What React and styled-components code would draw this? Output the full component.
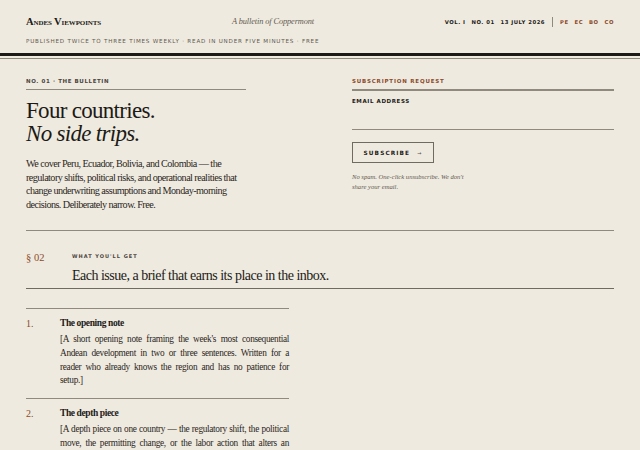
import React from "react";
import styled, { createGlobalStyle } from "styled-components";

const ink = "#1c1a17";
const paper = "#efeadf";
const copper = "#8a4b2c";
const muted = "#5e5850";
const rule = "#8f897e";

const serif = `"Liberation Serif", "Times New Roman", serif`;
const sans = `"DejaVu Sans", Verdana, sans-serif`;

const Global = createGlobalStyle`
  html, body { margin: 0; padding: 0; background: ${paper}; }
  body { color: ${ink}; font-family: ${serif}; }
  * { box-sizing: border-box; }
`;

const Page = styled.div`
  width: 640px;
  min-height: 450px;
  background: ${paper};
`;

const Masthead = styled.header`
  padding: 16px 26px 9px;
  border-bottom: 3px solid ${ink};
  box-shadow: 0 2px 0 ${paper}, 0 3px 0 ${rule};
`;

const MastRow = styled.div`
  display: flex;
  justify-content: space-between;
  align-items: center;
`;

const Brand = styled.div`
  font-family: ${serif};
  font-weight: 700;
  font-variant: small-caps;
  font-size: 10.5px;
  letter-spacing: -0.1px;
`;

const Tagline = styled.div`
  font-style: italic;
  font-size: 8.3px;
  letter-spacing: -0.1px;
  color: ${muted};
`;

const Meta = styled.div`
  display: flex;
  align-items: center;
  gap: 6px;
  font-family: ${sans};
  font-size: 5.3px;
  font-weight: 700;
  letter-spacing: 0.5px;
`;

const MetaSep = styled.span`
  width: 1px;
  height: 10px;
  background: ${rule};
  margin: 0 1px;
`;

const Country = styled.span`
  color: ${copper};
`;

const SubLine = styled.div`
  margin-top: 11px;
  font-family: ${sans};
  font-size: 5.6px;
  letter-spacing: 0.8px;
  color: ${muted};
`;

const Main = styled.main`
  padding: 22px 26px 0;
`;

const Hero = styled.section`
  display: grid;
  grid-template-columns: 1fr 1fr;
  column-gap: 64px;
  padding-bottom: 19px;
  border-bottom: 1px solid ${rule};
`;

const Lead = styled.div`
  max-width: 220px;
`;

const Kicker = styled.div`
  font-family: ${sans};
  font-size: 5.5px;
  font-weight: 700;
  letter-spacing: ${props => (props.$accent ? "0.8px" : "0.6px")};
  color: ${props => (props.$accent ? copper : "#4a453e")};
  padding-bottom: 5px;
  border-bottom: ${props => (props.$heavy ? "2px" : "1px")} solid ${rule};
`;

const Headline = styled.h1`
  margin: 9px 0 0;
  font-family: ${serif};
  font-weight: 400;
  font-size: 23px;
  line-height: 23px;
  letter-spacing: -0.7px;
`;

const HeadlineItalic = styled.em`
  display: block;
  font-style: italic;
`;

const Intro = styled.p`
  margin: 12px 0 0;
  font-size: 10.2px;
  line-height: 13.6px;
  letter-spacing: -0.56px;
  color: #2a2622;
`;

const Signup = styled.form`
  display: flex;
  flex-direction: column;
`;

const FieldLabel = styled.label`
  margin-top: 7px;
  font-family: ${sans};
  font-size: 5.5px;
  font-weight: 700;
  letter-spacing: 0.6px;
`;

const EmailInput = styled.input`
  margin-top: 4px;
  height: 22px;
  border: 0;
  border-bottom: 1px solid ${rule};
  background: transparent;
  outline: none;
  font-family: ${serif};
  font-size: 11px;
  padding: 0;
`;

const SubscribeButton = styled.button`
  align-self: flex-start;
  margin-top: 12px;
  width: 82px;
  height: 21px;
  border: 1px solid #6f6a62;
  background: transparent;
  font-family: ${sans};
  font-size: 5.8px;
  font-weight: 700;
  letter-spacing: 1.1px;
  color: ${ink};
  padding: 0;
  cursor: pointer;
`;

const Arrow = styled.span`
  margin-left: 7px;
  color: ${muted};
  font-size: 5px;
`;

const Note = styled.p`
  margin: 9px 0 0;
  max-width: 120px;
  font-style: italic;
  font-size: 6.6px;
  line-height: 10px;
  color: ${muted};
`;

const SectionHead = styled.section`
  display: grid;
  grid-template-columns: 46px 1fr;
  padding: 22px 0 3px;
  border-bottom: 1px solid #6f6a62;
`;

const SectionNo = styled.div`
  color: ${copper};
  font-size: 10.5px;
  line-height: 9px;
`;

const SectionKicker = styled.div`
  font-family: ${sans};
  font-size: 5px;
  font-weight: 700;
  letter-spacing: 1px;
  color: #4a453e;
`;

const SectionTitle = styled.h2`
  margin: 8px 0 0;
  font-weight: 400;
  font-size: 14px;
  line-height: 18px;
  letter-spacing: -0.5px;
`;

const Items = styled.ol`
  list-style: none;
  margin: 19px 0 0;
  padding: 0;
  width: 263px;
  border-top: 1px solid ${rule};
`;

const Item = styled.li`
  display: grid;
  grid-template-columns: 34px 1fr;
  padding: 8px 0 10px;
  border-bottom: 1px solid ${rule};
`;

const ItemNo = styled.div`
  color: ${copper};
  font-size: 10px;
  line-height: 13px;
`;

const ItemTitle = styled.h3`
  margin: 0;
  font-size: 9.5px;
  line-height: 13px;
  font-weight: 700;
  letter-spacing: -0.4px;
`;

const ItemText = styled.p`
  margin: 3px 0 0;
  font-size: 9.3px;
  line-height: 13.7px;
  letter-spacing: -0.32px;
  text-align: justify;
  color: #2a2622;
`;

const items = [
  {
    title: "The opening note",
    text: "[A short opening note framing the week's most consequential Andean development in two or three sentences. Written for a reader who already knows the region and has no patience for setup.]",
  },
  {
    title: "The depth piece",
    text: "[A depth piece on one country — the regulatory shift, the political move, the permitting change, or the labor action that alters an operating assumption, with the context needed to act on it.]",
  },
];

export default function App() {
  return (
    <Page>
      <Global />
      <Masthead>
        <MastRow>
          <Brand>Andes Viewpoints</Brand>
          <Tagline>A bulletin of Coppermont</Tagline>
          <Meta>
            <span>VOL. I</span>
            <span>NO. 01</span>
            <span>13 JULY 2026</span>
            <MetaSep />
            <Country>PE</Country>
            <Country>EC</Country>
            <Country>BO</Country>
            <Country>CO</Country>
          </Meta>
        </MastRow>
        <SubLine>
          PUBLISHED TWICE TO THREE TIMES WEEKLY · READ IN UNDER FIVE MINUTES · FREE
        </SubLine>
      </Masthead>

      <Main>
        <Hero>
          <Lead>
            <Kicker>NO. 01 · THE BULLETIN</Kicker>
            <Headline>
              Four countries.
              <HeadlineItalic>No side trips.</HeadlineItalic>
            </Headline>
            <Intro>
              We cover Peru, Ecuador, Bolivia, and Colombia — the regulatory
              shifts, political risks, and operational realities that change
              underwriting assumptions and Monday-morning decisions.
              Deliberately narrow. Free.
            </Intro>
          </Lead>
          <Signup onSubmit={e => e.preventDefault()}>
            <Kicker $accent $heavy>SUBSCRIPTION REQUEST</Kicker>
            <FieldLabel htmlFor="email">EMAIL ADDRESS</FieldLabel>
            <EmailInput id="email" type="email" />
            <SubscribeButton type="submit">
              SUBSCRIBE<Arrow>→</Arrow>
            </SubscribeButton>
            <Note>No spam. One-click unsubscribe. We don't share your email.</Note>
          </Signup>
        </Hero>

        <SectionHead>
          <SectionNo>§ 02</SectionNo>
          <div>
            <SectionKicker>WHAT YOU'LL GET</SectionKicker>
            <SectionTitle>Each issue, a brief that earns its place in the inbox.</SectionTitle>
          </div>
        </SectionHead>

        <Items>
          {items.map((it, i) => (
            <Item key={it.title}>
              <ItemNo>{i + 1}.</ItemNo>
              <div>
                <ItemTitle>{it.title}</ItemTitle>
                <ItemText>{it.text}</ItemText>
              </div>
            </Item>
          ))}
        </Items>
      </Main>
    </Page>
  );
}
